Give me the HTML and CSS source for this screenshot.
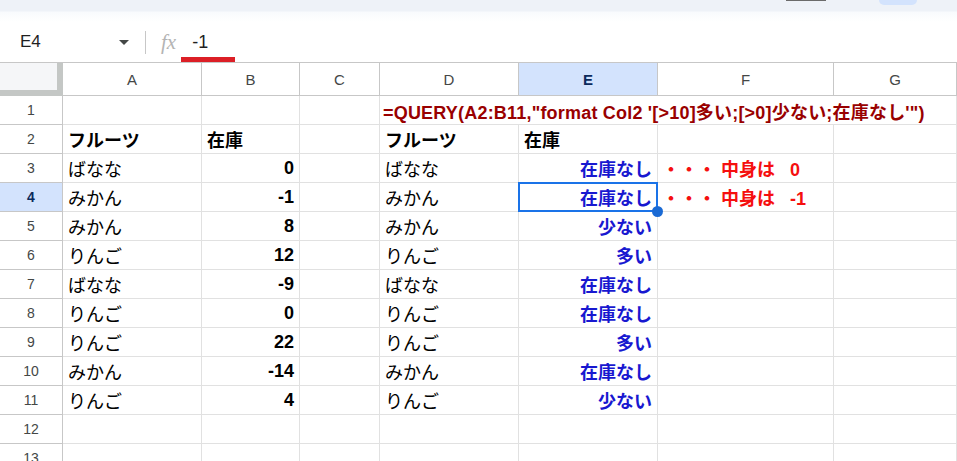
FILE: index.html
```html
<!DOCTYPE html>
<html lang="ja">
<head>
  <meta charset="UTF-8">
  <meta name="viewport" content="width=device-width, initial-scale=1.0">
  <link rel="stylesheet" href="styles.css">
  <title>QUERY format</title>
</head>
<body>

<div class="toolbar">
  <span class="tb-btn"></span>
  <span class="tb-pill"></span>
</div>

<div class="formula-bar">
  <div class="name-box">E4<span class="caret"></span></div>
  <div class="divider"></div>
  <span class="fx">fx</span>
  <span class="fval">-1</span>
  <span class="mark"></span>
</div>

<div class="sheet">
  <div class="corner"></div>
  <div class="colhead">A</div>
  <div class="colhead">B</div>
  <div class="colhead">C</div>
  <div class="colhead">D</div>
  <div class="colhead active">E</div>
  <div class="colhead">F</div>
  <div class="colhead">G</div>

  <div class="rowhead">1</div>
  <div class="cell"></div>
  <div class="cell"></div>
  <div class="cell"></div>
  <div class="cell formula">=QUERY(A2:B11,"format Col2 '[&gt;10]多い;[&gt;0]少ない;在庫なし'")</div>

  <div class="rowhead">2</div>
  <div class="cell bold">フルーツ</div>
  <div class="cell bold">在庫</div>
  <div class="cell"></div>
  <div class="cell bold">フルーツ</div>
  <div class="cell bold">在庫</div>
  <div class="cell"></div>
  <div class="cell"></div>

  <div class="rowhead">3</div>
  <div class="cell">ばなな</div>
  <div class="cell num">0</div>
  <div class="cell"></div>
  <div class="cell">ばなな</div>
  <div class="cell res">在庫なし</div>
  <div class="cell note">・・・ 中身は&nbsp;&nbsp; 0</div>
  <div class="cell"></div>

  <div class="rowhead active">4</div>
  <div class="cell">みかん</div>
  <div class="cell num">-1</div>
  <div class="cell"></div>
  <div class="cell">みかん</div>
  <div class="cell res selected">在庫なし</div>
  <div class="cell note">・・・ 中身は&nbsp;&nbsp; -1</div>
  <div class="cell"></div>

  <div class="rowhead">5</div>
  <div class="cell">みかん</div>
  <div class="cell num">8</div>
  <div class="cell"></div>
  <div class="cell">みかん</div>
  <div class="cell res">少ない</div>
  <div class="cell"></div>
  <div class="cell"></div>

  <div class="rowhead">6</div>
  <div class="cell">りんご</div>
  <div class="cell num">12</div>
  <div class="cell"></div>
  <div class="cell">りんご</div>
  <div class="cell res">多い</div>
  <div class="cell"></div>
  <div class="cell"></div>

  <div class="rowhead">7</div>
  <div class="cell">ばなな</div>
  <div class="cell num">-9</div>
  <div class="cell"></div>
  <div class="cell">ばなな</div>
  <div class="cell res">在庫なし</div>
  <div class="cell"></div>
  <div class="cell"></div>

  <div class="rowhead">8</div>
  <div class="cell">りんご</div>
  <div class="cell num">0</div>
  <div class="cell"></div>
  <div class="cell">りんご</div>
  <div class="cell res">在庫なし</div>
  <div class="cell"></div>
  <div class="cell"></div>

  <div class="rowhead">9</div>
  <div class="cell">りんご</div>
  <div class="cell num">22</div>
  <div class="cell"></div>
  <div class="cell">りんご</div>
  <div class="cell res">多い</div>
  <div class="cell"></div>
  <div class="cell"></div>

  <div class="rowhead">10</div>
  <div class="cell">みかん</div>
  <div class="cell num">-14</div>
  <div class="cell"></div>
  <div class="cell">みかん</div>
  <div class="cell res">在庫なし</div>
  <div class="cell"></div>
  <div class="cell"></div>

  <div class="rowhead">11</div>
  <div class="cell">りんご</div>
  <div class="cell num">4</div>
  <div class="cell"></div>
  <div class="cell">りんご</div>
  <div class="cell res">少ない</div>
  <div class="cell"></div>
  <div class="cell"></div>

  <div class="rowhead">12</div>
  <div class="cell"></div>
  <div class="cell"></div>
  <div class="cell"></div>
  <div class="cell"></div>
  <div class="cell"></div>
  <div class="cell"></div>
  <div class="cell"></div>

  <div class="rowhead">13</div>
  <div class="cell"></div>
  <div class="cell"></div>
  <div class="cell"></div>
  <div class="cell"></div>
  <div class="cell"></div>
  <div class="cell"></div>
  <div class="cell"></div>
</div>

</body>
</html>
```

FILE: styles.css
```css
body {
  margin: 0;
  height: 100vh;
  overflow: hidden;
  background-color: #fff;
  font-family: "Liberation Sans", Arial, "Noto Sans CJK JP", sans-serif;
  color: #000;
}

.toolbar {
  height: 22px;
  background: linear-gradient(#eef2f8 0, #eef2f8 11px, #f8fafd 12px, #fff 22px);
  display: flex;
  align-items: flex-start;
}

.tb-btn {
  margin-left: 786px;
  width: 40px;
  height: 1px;
  background-color: #6b6b6b;
}

.tb-pill {
  margin-left: 53px;
  width: 38px;
  height: 5px;
  background-color: #d3e3fd;
  border-radius: 0 0 6px 6px;
}

.formula-bar {
  position: relative;
  height: 40px;
  display: flex;
  align-items: center;
}

.name-box {
  width: 109px;
  padding-left: 20px;
  display: flex;
  align-items: center;
  font-size: 17px;
  color: #1f1f1f;
}

.caret {
  margin-left: auto;
  width: 0;
  height: 0;
  border-left: 5px solid transparent;
  border-right: 5px solid transparent;
  border-top: 5px solid #444746;
}

.divider {
  margin-left: 16px;
  width: 1px;
  height: 23px;
  background-color: #c7c7c7;
}

.fx {
  margin-left: 15px;
  font-family: "Liberation Serif", serif;
  font-style: italic;
  font-size: 21px;
  color: #b4b4b4;
}

.fval {
  margin-left: 16px;
  font-size: 18px;
  color: #1f1f1f;
}

.mark {
  position: absolute;
  left: 181px;
  top: 35px;
  width: 54px;
  height: 5px;
  background-color: #dc1f26;
}

.sheet {
  display: grid;
  grid-template-columns: 63px 139px 98px 80px 139px 139px 176px 123px;
  grid-template-rows: 33px;
  grid-auto-rows: 29px;
  border-top: 1px solid #c7c7c7;
}

.corner {
  background-color: #f5f6f8;
  border-right: 6px solid #c4c7c5;
  border-bottom: 6px solid #c4c7c5;
}

.colhead {
  display: flex;
  align-items: center;
  justify-content: center;
  font-size: 15px;
  color: #444746;
  border-right: 1px solid #c7c7c7;
  border-bottom: 1px solid #c7c7c7;
}

.rowhead {
  display: flex;
  align-items: center;
  justify-content: center;
  font-size: 14px;
  color: #444746;
  border-right: 1px solid #c7c7c7;
  border-bottom: 1px solid #c7c7c7;
}

.active {
  background-color: #d3e3fd;
  color: #0b2a5c;
  font-weight: bold;
}

.cell {
  position: relative;
  display: flex;
  align-items: center;
  padding: 0 5px;
  font-size: 18px;
  white-space: nowrap;
  border-right: 1px solid #e1e1e1;
  border-bottom: 1px solid #e1e1e1;
}

.bold {
  font-weight: bold;
}

.num {
  justify-content: flex-end;
  font-weight: bold;
}

.res {
  justify-content: flex-end;
  font-weight: bold;
  color: #1818d0;
}

.formula {
  grid-column: span 4;
  padding-left: 3px;
  padding-top: 2px;
  font-weight: bold;
  letter-spacing: 0.2px;
  color: #990000;
}

.note {
  padding-left: 4px;
  font-weight: bold;
  color: #f50f0f;
}

.selected::after {
  content: "";
  position: absolute;
  left: -1px;
  top: -1px;
  right: -1px;
  bottom: -1px;
  border: 2px solid #1a73e8;
}

.selected::before {
  content: "";
  position: absolute;
  right: -6px;
  bottom: -6px;
  width: 11px;
  height: 11px;
  border-radius: 50%;
  background-color: #1a6ad4;
  z-index: 2;
}
```
